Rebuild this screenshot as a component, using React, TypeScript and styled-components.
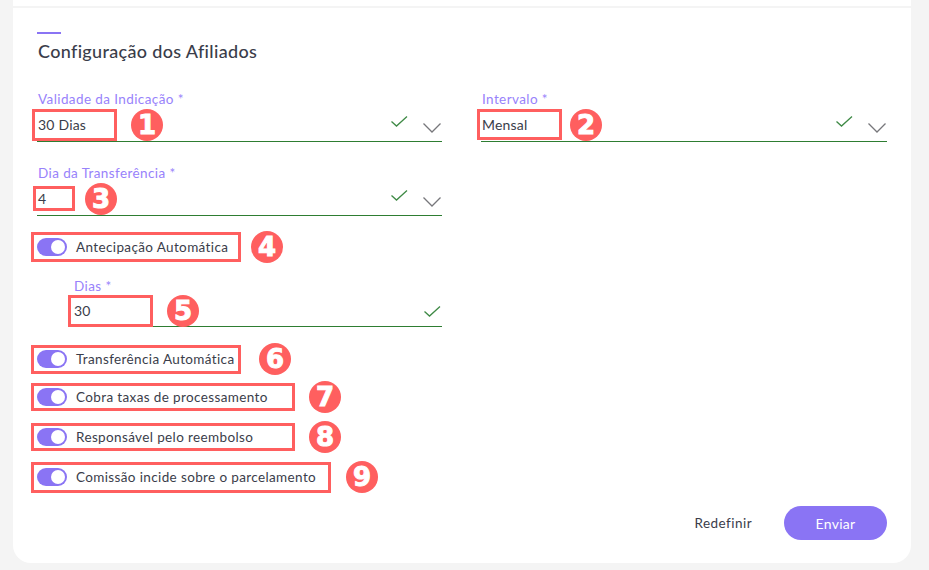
import styled, { createGlobalStyle } from 'styled-components';

const GlobalStyle = createGlobalStyle`
  html, body {
    margin: 0;
    padding: 0;
    height: 570px;
    overflow: hidden;
    background-color: #f4f4f4;
    font-family: 'Lato', 'Noto Sans', sans-serif;
  }
`;

const Page = styled.div`
  width: 929px;
  height: 570px;
  box-sizing: border-box;
  padding: 0 18px 0 13px;
`;

const TopStrip = styled.div`
  height: 6px;
  background-color: #fff;
  margin-bottom: 2px;
`;

const Card = styled.form`
  height: 555px;
  box-sizing: border-box;
  padding: 24px 24px 0;
  background-color: #fff;
  border-radius: 0 0 18px 18px;
  display: flex;
  flex-direction: column;
`;

const Accent = styled.div`
  width: 24px;
  height: 2px;
  background-color: #8a74f4;
`;

const Title = styled.h2`
  margin: 5px 0 29px 1px;
  height: 24px;
  font-size: 18px;
  line-height: 24px;
  font-weight: 500;
  color: #3a3d4a;
  letter-spacing: 0.33px;
`;

const Grid = styled.div`
  display: grid;
  grid-template-columns: 405px 406px;
  column-gap: 39px;
  row-gap: 24px;
`;

const FieldBox = styled.div<{ $indent?: number; $width?: number; $top?: number }>`
  margin-left: ${p => p.$indent ?? 0}px;
  margin-top: ${p => p.$top ?? 0}px;
  width: ${p => (p.$width ? `${p.$width}px` : 'auto')};
`;

const Label = styled.label`
  display: block;
  height: 16px;
  padding-left: 1px;
  font-size: 13.5px;
  line-height: 14px;
  color: #9882fb;
  letter-spacing: 0.4px;
`;

const ValueRow = styled.div<{ $height?: number }>`
  height: ${p => p.$height ?? 33}px;
  display: flex;
  align-items: center;
  border-bottom: 1px solid #2e7d32;
`;

const Highlight = styled.div<{ $width: number; $height: number; $shift?: number }>`
  width: ${p => p.$width}px;
  height: ${p => p.$height}px;
  flex: none;
  box-sizing: border-box;
  margin-left: ${p => p.$shift ?? -5}px;
  padding-left: ${p => -(p.$shift ?? -5) - 2}px;
  padding-bottom: 1px;
  display: flex;
  align-items: center;
  border: 3px solid #ff5f5f;
  font-size: 14px;
  color: #3a3d4a;
  letter-spacing: 0.2px;
`;

const Badge = styled.span<{ $gap: number }>`
  width: 32px;
  height: 32px;
  flex: none;
  margin-left: ${p => p.$gap}px;
  border-radius: 50%;
  background-color: #ff5f5f;
  color: #fff;
  display: flex;
  align-items: center;
  justify-content: center;
  font-family: 'DejaVu Sans', sans-serif;
  font-size: 26px;
  font-weight: 700;
  -webkit-text-stroke: 1px #fff;
`;

const Icons = styled.div<{ $top?: number }>`
  margin-left: auto;
  margin-right: 1px;
  margin-top: ${p => p.$top ?? 0}px;
  align-self: flex-start;
  display: flex;
  gap: 15px;
`;

const CheckIcon = styled.svg`
  width: 17px;
  height: 11px;
  margin-top: 8px;
  flex: none;
`;

const ChevronIcon = styled.svg`
  width: 18px;
  height: 10px;
  margin-top: 15px;
  flex: none;
`;

const ToggleList = styled.div`
  margin-top: 16px;
  display: flex;
  flex-direction: column;
`;

const ToggleRow = styled.div<{ $top: number }>`
  display: flex;
  align-items: center;
  margin-top: ${p => p.$top}px;
`;

const ToggleBox = styled.div<{ $width: number; $height: number }>`
  width: ${p => p.$width}px;
  height: ${p => p.$height}px;
  box-sizing: border-box;
  margin-left: -6px;
  padding-left: 3px;
  display: flex;
  align-items: center;
  gap: 9px;
  border: 3px solid #ff5f5f;
  font-size: 13.5px;
  color: #3a3d4a;
  letter-spacing: 0.37px;
`;

const Switch = styled.span`
  position: relative;
  width: 30px;
  height: 18px;
  flex: none;
  border-radius: 9px;
  background-color: #8a74f4;

  &::after {
    content: '';
    position: absolute;
    top: 2px;
    right: 2px;
    width: 14px;
    height: 14px;
    border-radius: 50%;
    background-color: #fff;
  }
`;

const Actions = styled.div`
  margin-top: 13px;
  display: flex;
  justify-content: flex-end;
  align-items: center;
  gap: 32px;
`;

const ResetButton = styled.button`
  padding: 0;
  border: none;
  background: none;
  font-family: inherit;
  font-size: 13.5px;
  letter-spacing: 0.45px;
  color: #3a3d4a;
`;

const SubmitButton = styled.button`
  width: 103px;
  height: 34px;
  padding: 0;
  border: none;
  border-radius: 17px;
  background-color: #8a74f4;
  color: #fff;
  font-family: inherit;
  font-size: 14px;
  letter-spacing: 0.3px;
`;

const FieldIcons = ({ chevron = true, top = 0 }: { chevron?: boolean; top?: number }) => (
  <Icons $top={top}>
    <CheckIcon viewBox="0 0 17 11" fill="none" stroke="#3f8a46" strokeWidth="1.3">
      <path d="M0.5 5.5 L5.5 10 L16 0.5" />
    </CheckIcon>
    {chevron && (
      <ChevronIcon viewBox="0 0 18 10" fill="none" stroke="#77777b" strokeWidth="1.3">
        <path d="M0.5 0.5 L9 9 L17.5 0.5" />
      </ChevronIcon>
    )}
  </Icons>
);

const toggles = [
  { text: 'Transferência Automática', n: 6, width: 210, height: 29, gap: 18, top: 0 },
  { text: 'Cobra taxas de processamento', n: 7, width: 264, height: 28, gap: 14, top: 6 },
  { text: 'Responsável pelo reembolso', n: 8, width: 264, height: 28, gap: 14, top: 8 },
  { text: 'Comissão incide sobre o parcelamento', n: 9, width: 300, height: 31, gap: 15, top: 8 },
];

export default function App() {
  return (
    <Page>
      <GlobalStyle />
      <TopStrip />
      <Card>
        <Accent />
        <Title>Configuração dos Afiliados</Title>
        <Grid>
          <FieldBox>
            <Label>Validade da Indicação *</Label>
            <ValueRow>
              <Highlight $width={85} $height={32}>30 Dias</Highlight>
              <Badge $gap={14}>1</Badge>
              <FieldIcons />
            </ValueRow>
          </FieldBox>
          <FieldBox>
            <Label>Intervalo *</Label>
            <ValueRow>
              <Highlight $width={85} $height={31} $shift={-4}>Mensal</Highlight>
              <Badge $gap={8}>2</Badge>
              <FieldIcons />
            </ValueRow>
          </FieldBox>
          <FieldBox>
            <Label>Dia da Transferência *</Label>
            <ValueRow>
              <Highlight $width={42} $height={25} $shift={-4}>4</Highlight>
              <Badge $gap={10}>3</Badge>
              <FieldIcons />
            </ValueRow>
          </FieldBox>
        </Grid>
        <ToggleRow $top={15}>
          <ToggleBox $width={210} $height={30}>
            <Switch />
            Antecipação Automática
          </ToggleBox>
          <Badge $gap={10}>4</Badge>
        </ToggleRow>
        <FieldBox $indent={36} $width={369} $top={16}>
          <Label>Dias *</Label>
          <ValueRow $height={31}>
            <Highlight $width={85} $height={32}>30</Highlight>
            <Badge $gap={14}>5</Badge>
            <FieldIcons chevron={false} top={3} />
          </ValueRow>
        </FieldBox>
        <ToggleList>
          {toggles.map(t => (
            <ToggleRow key={t.n} $top={t.top}>
              <ToggleBox $width={t.width} $height={t.height}>
                <Switch />
                {t.text}
              </ToggleBox>
              <Badge $gap={t.gap}>{t.n}</Badge>
            </ToggleRow>
          ))}
        </ToggleList>
        <Actions>
          <ResetButton type="button">Redefinir</ResetButton>
          <SubmitButton type="button">Enviar</SubmitButton>
        </Actions>
      </Card>
    </Page>
  );
}
